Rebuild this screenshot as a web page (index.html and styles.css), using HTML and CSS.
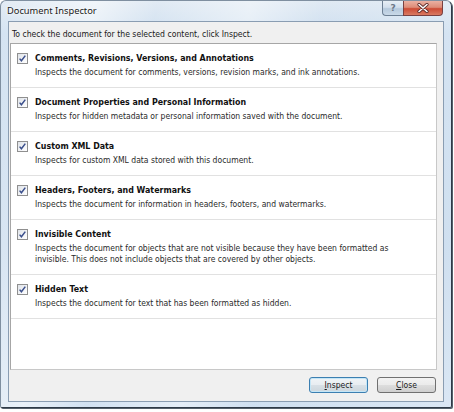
FILE: index.html
```html
<!DOCTYPE html>
<html>
<head>
<meta charset="utf-8">
<title>Document Inspector</title>
<link rel="stylesheet" href="styles.css">
</head>
<body>
<div class="window">
  <div class="titlebar">
    <div class="title">Document Inspector</div>
    <div class="caption-buttons">
      <div class="cap-btn help"><span>?</span></div>
      <div class="cap-btn close">
        <svg width="12" height="10" viewBox="0 0 12 10"><path d="M2 1.5 L10 8.5 M10 1.5 L2 8.5" stroke="#5a2a2a" stroke-width="3.2" stroke-linecap="round"/><path d="M2 1.5 L10 8.5 M10 1.5 L2 8.5" stroke="#ffffff" stroke-width="1.6" stroke-linecap="round"/></svg>
      </div>
    </div>
  </div>
  <div class="panel">
    <div class="instruction">To check the document for the selected content, click Inspect.</div>
    <div class="list">
      <div class="row">
        <span class="check"><svg width="11" height="11" viewBox="0 0 11 11"><path d="M2.6 5.6 L4.4 7.8 L8.3 2.6" fill="none" stroke="#3b4f8c" stroke-width="1.5"/></svg></span>
        <div class="text">
          <div class="name">Comments, Revisions, Versions, and Annotations</div>
          <div class="desc">Inspects the document for comments, versions, revision marks, and ink annotations.</div>
        </div>
      </div>
      <div class="row">
        <span class="check"><svg width="11" height="11" viewBox="0 0 11 11"><path d="M2.6 5.6 L4.4 7.8 L8.3 2.6" fill="none" stroke="#3b4f8c" stroke-width="1.5"/></svg></span>
        <div class="text">
          <div class="name">Document Properties and Personal Information</div>
          <div class="desc">Inspects for hidden metadata or personal information saved with the document.</div>
        </div>
      </div>
      <div class="row">
        <span class="check"><svg width="11" height="11" viewBox="0 0 11 11"><path d="M2.6 5.6 L4.4 7.8 L8.3 2.6" fill="none" stroke="#3b4f8c" stroke-width="1.5"/></svg></span>
        <div class="text">
          <div class="name">Custom XML Data</div>
          <div class="desc">Inspects for custom XML data stored with this document.</div>
        </div>
      </div>
      <div class="row">
        <span class="check"><svg width="11" height="11" viewBox="0 0 11 11"><path d="M2.6 5.6 L4.4 7.8 L8.3 2.6" fill="none" stroke="#3b4f8c" stroke-width="1.5"/></svg></span>
        <div class="text">
          <div class="name">Headers, Footers, and Watermarks</div>
          <div class="desc">Inspects the document for information in headers, footers, and watermarks.</div>
        </div>
      </div>
      <div class="row">
        <span class="check"><svg width="11" height="11" viewBox="0 0 11 11"><path d="M2.6 5.6 L4.4 7.8 L8.3 2.6" fill="none" stroke="#3b4f8c" stroke-width="1.5"/></svg></span>
        <div class="text">
          <div class="name">Invisible Content</div>
          <div class="desc">Inspects the document for objects that are not visible because they have been formatted as<br>invisible. This does not include objects that are covered by other objects.</div>
        </div>
      </div>
      <div class="row">
        <span class="check"><svg width="11" height="11" viewBox="0 0 11 11"><path d="M2.6 5.6 L4.4 7.8 L8.3 2.6" fill="none" stroke="#3b4f8c" stroke-width="1.5"/></svg></span>
        <div class="text">
          <div class="name">Hidden Text</div>
          <div class="desc">Inspects the document for text that has been formatted as hidden.</div>
        </div>
      </div>
    </div>
    <div class="footer">
      <button class="btn default"><u>I</u>nspect</button>
      <button class="btn"><u>C</u>lose</button>
    </div>
  </div>
</div>
</body>
</html>
```

FILE: styles.css
```css
html, body {
  margin: 0;
  padding: 0;
  background: #ffffff;
}

body {
  width: 454px;
  height: 412px;
  overflow: hidden;
  font-family: "DejaVu Sans Condensed", "DejaVu Sans", "Liberation Sans", sans-serif;
}

.window {
  box-sizing: border-box;
  width: 452px;
  height: 408px;
  display: flex;
  flex-direction: column;
  padding: 0 7px 5px 7px;
  border: 1px solid #7f8fa0;
  border-right-color: #2e3a47;
  border-bottom-color: #2e3a47;
  border-radius: 6px 6px 2px 2px;
  background:
    linear-gradient(100deg, rgba(255,255,255,0.2) 0%, rgba(255,255,255,0.6) 18%, rgba(255,255,255,0.15) 30%, rgba(255,255,255,0.5) 48%, rgba(255,255,255,0.1) 62%, rgba(255,255,255,0.3) 100%),
    linear-gradient(180deg, #dce7f2 0%, #c8dbee 8%, #bed4ea 60%, #cadcef 100%);
  box-shadow: 1px 1px 0 #55606c;
}

.titlebar {
  height: 20px;
  display: flex;
  justify-content: space-between;
  align-items: flex-start;
}

.title {
  margin-left: -1px;
  padding-top: 4px;
  font-family: "Noto Sans", "Open Sans", sans-serif;
  font-size: 9.3px;
  line-height: 12px;
  color: #1a1a1a;
  text-shadow: 0 0 4px #ffffff, 0 0 2px #ffffff;
}

.caption-buttons {
  display: flex;
  margin-right: 1px;
}

.cap-btn {
  box-sizing: border-box;
  height: 15px;
  display: flex;
  align-items: center;
  justify-content: center;
  border: 1px solid #6d7f93;
  border-top: none;
}

.help {
  width: 21px;
  border-radius: 0 0 0 4px;
  border-right: none;
  background: linear-gradient(180deg, #e7eef5 0%, #d3dfec 45%, #b6c9dc 55%, #c9d9e8 100%);
  font-family: "DejaVu Sans", sans-serif;
  font-weight: bold;
  font-size: 9px;
  color: #6b7887;
}

.close {
  width: 40px;
  border-radius: 0 0 4px 0;
  border-color: #7a4040;
  background: linear-gradient(180deg, #eab0a2 0%, #dd8c78 45%, #cc4b35 55%, #d97a62 100%);
}

.panel {
  box-sizing: border-box;
  flex: 1;
  display: flex;
  flex-direction: column;
  padding: 0 6px 0 1px;
  border: 1px solid #8a9db2;
  background: #f0f0f0;
}

.instruction {
  padding: 5px 0 0 2px;
  height: 14px;
  margin-bottom: 2px;
  font-size: 8.6px;
  line-height: 14px;
  color: #1a1a1a;
}

.list {
  flex: 1;
  border: 1px solid #a6a6a6;
  border-right-color: #c8c8c8;
  border-bottom-color: #c8c8c8;
  background: #ffffff;
}

.row {
  display: flex;
  align-items: flex-start;
  padding: 8px 0 9px 6px;
  border-bottom: 1px solid #e1e1e1;
}

.check {
  box-sizing: border-box;
  width: 11px;
  height: 11px;
  margin-top: 1px;
  margin-right: 7px;
  flex: none;
  border: 1px solid #8f8f8f;
  background: linear-gradient(135deg, #dfe3e8 0%, #f6f7f9 70%, #ffffff 100%);
  position: relative;
}

.check svg {
  position: absolute;
  left: -1px;
  top: -1px;
}

.text {
  flex: 1;
}

.name {
  font-size: 8.8px;
  font-weight: bold;
  line-height: 13px;
  color: #111111;
}

.desc {
  margin-top: 2px;
  font-size: 8.5px;
  line-height: 11px;
  color: #2a2a2a;
}

.footer {
  display: flex;
  justify-content: flex-end;
  gap: 9px;
  padding: 7px 1px 8px 0;
}

.btn {
  box-sizing: border-box;
  width: 59px;
  height: 16px;
  padding: 0;
  border: 1px solid #707070;
  border-radius: 3px;
  background: linear-gradient(180deg, #f2f2f2 0%, #ebebeb 48%, #dddddd 52%, #cfcfcf 100%);
  font-family: "DejaVu Sans Condensed", "DejaVu Sans", sans-serif;
  font-size: 8.5px;
  line-height: 14px;
  color: #1a1a1a;
}

.btn.default {
  border-color: #3c7fb1;
  box-shadow: inset 0 0 0 1px #c4e6f7;
  background: linear-gradient(180deg, #f0f4f7 0%, #e8edf1 48%, #d8e0e6 52%, #cdd6dd 100%);
}

.btn u {
  text-decoration: underline;
}
```
